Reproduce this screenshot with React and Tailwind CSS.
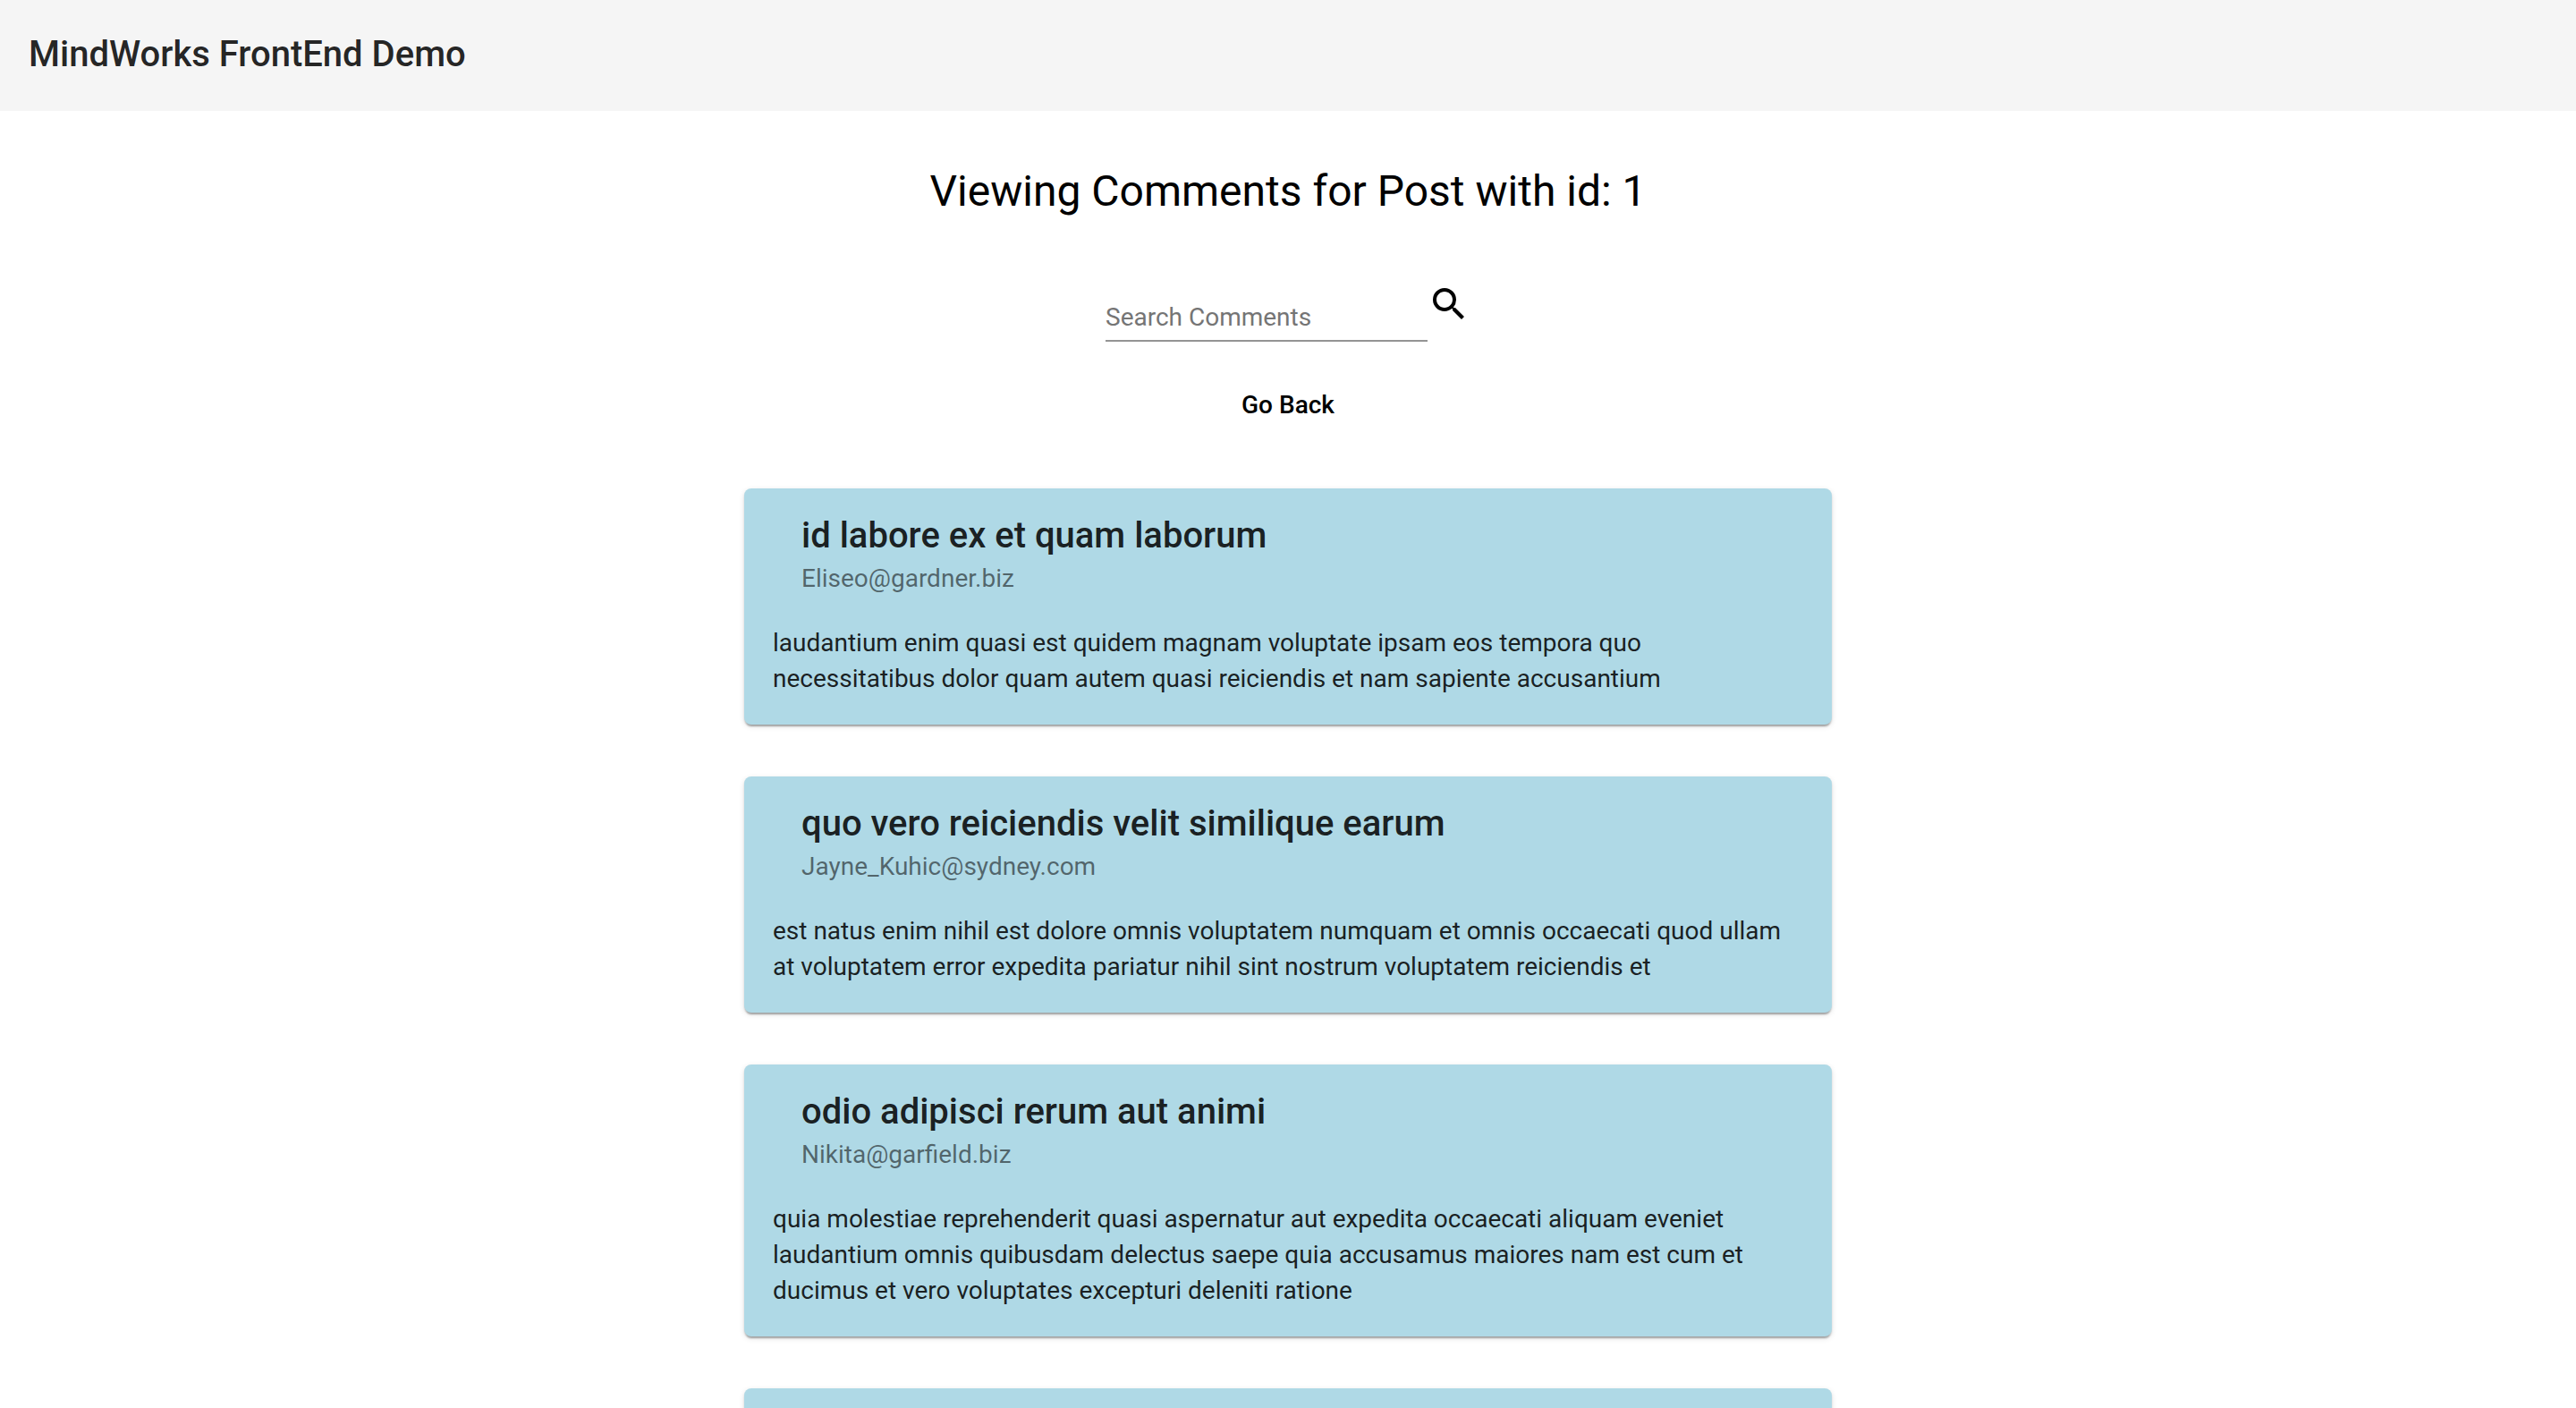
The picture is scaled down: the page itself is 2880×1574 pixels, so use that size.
import { useState } from 'react';

const comments = [
  {
    name: 'id labore ex et quam laborum',
    email: 'Eliseo@gardner.biz',
    body: 'laudantium enim quasi est quidem magnam voluptate ipsam eos tempora quo necessitatibus dolor quam autem quasi reiciendis et nam sapiente accusantium',
  },
  {
    name: 'quo vero reiciendis velit similique earum',
    email: 'Jayne_Kuhic@sydney.com',
    body: 'est natus enim nihil est dolore omnis voluptatem numquam et omnis occaecati quod ullam at voluptatem error expedita pariatur nihil sint nostrum voluptatem reiciendis et',
  },
  {
    name: 'odio adipisci rerum aut animi',
    email: 'Nikita@garfield.biz',
    body: 'quia molestiae reprehenderit quasi aspernatur aut expedita occaecati aliquam eveniet laudantium omnis quibusdam delectus saepe quia accusamus maiores nam est cum et ducimus et vero voluptates excepturi deleniti ratione',
  },
];

function CommentCard({ name, email, body }) {
  return (
    <article className="rounded-lg bg-[#afd9e6] px-8 pt-[25px] pb-[31px] text-black/87 shadow-[0_4px_2px_-2px_rgba(0,0,0,0.2),0_2px_2px_0_rgba(0,0,0,0.14),0_2px_6px_0_rgba(0,0,0,0.12)]">
      <header className="px-8 pb-8">
        <h2 className="text-[40px] leading-14 font-medium">{name}</h2>
        <p className="text-[28px] leading-10 text-black/54">{email}</p>
      </header>
      <p className="text-[28px] leading-10">{body}</p>
    </article>
  );
}

export default function App() {
  const [query, setQuery] = useState('');
  const shown = comments.filter((c) => (c.name + c.email + c.body).includes(query));

  return (
    <div className="h-screen overflow-hidden bg-white font-['Roboto',sans-serif] text-black">
      <header className="flex h-31 items-center bg-[#f5f5f5] px-8 pb-[2px]">
        <span className="text-[40px] leading-16 font-medium text-black/87">MindWorks FrontEnd Demo</span>
      </header>
      <main className="flex flex-col items-center px-8">
        <h1 className="mt-14 text-[48px] leading-17">Viewing Comments for Post with id: 1</h1>
        <form className="mt-17 flex items-start" onSubmit={(e) => e.preventDefault()}>
          <input
            type="text"
            aria-label="Search Comments"
            placeholder="Search Comments"
            value={query}
            onChange={(e) => setQuery(e.target.value)}
            className="mt-4 h-[50px] w-[360px] border-b-2 border-[#949494] pb-1 text-[28px] outline-none placeholder:text-[#757575]"
          />
          <button type="submit" aria-label="Search">
            <svg viewBox="0 0 24 24" className="size-12" fill="currentColor" aria-hidden="true">
              <path d="M15.5 14h-.79l-.28-.27A6.471 6.471 0 0 0 16 9.5 6.5 6.5 0 1 0 9.5 16c1.61 0 3.09-.59 4.23-1.57l.27.28v.79l5 4.99L20.49 19l-4.99-5zm-6 0C7.01 14 5 11.99 5 9.5S7.01 5 9.5 5 14 7.01 14 9.5 11.99 14 9.5 14z" />
            </svg>
          </button>
        </form>
        <button type="button" className="mt-[35px] px-8 text-[28px] leading-18 font-medium">
          Go Back
        </button>
        <section aria-label="Comments" className="mt-[57px] flex w-full max-w-[1216px] flex-col gap-[58px]">
          {shown.map((c) => (
            <CommentCard key={c.email} {...c} />
          ))}
          <article className="h-64 rounded-lg bg-[#afd9e6] shadow-[0_4px_2px_-2px_rgba(0,0,0,0.2),0_2px_2px_0_rgba(0,0,0,0.14),0_2px_6px_0_rgba(0,0,0,0.12)]" />
        </section>
      </main>
    </div>
  );
}
